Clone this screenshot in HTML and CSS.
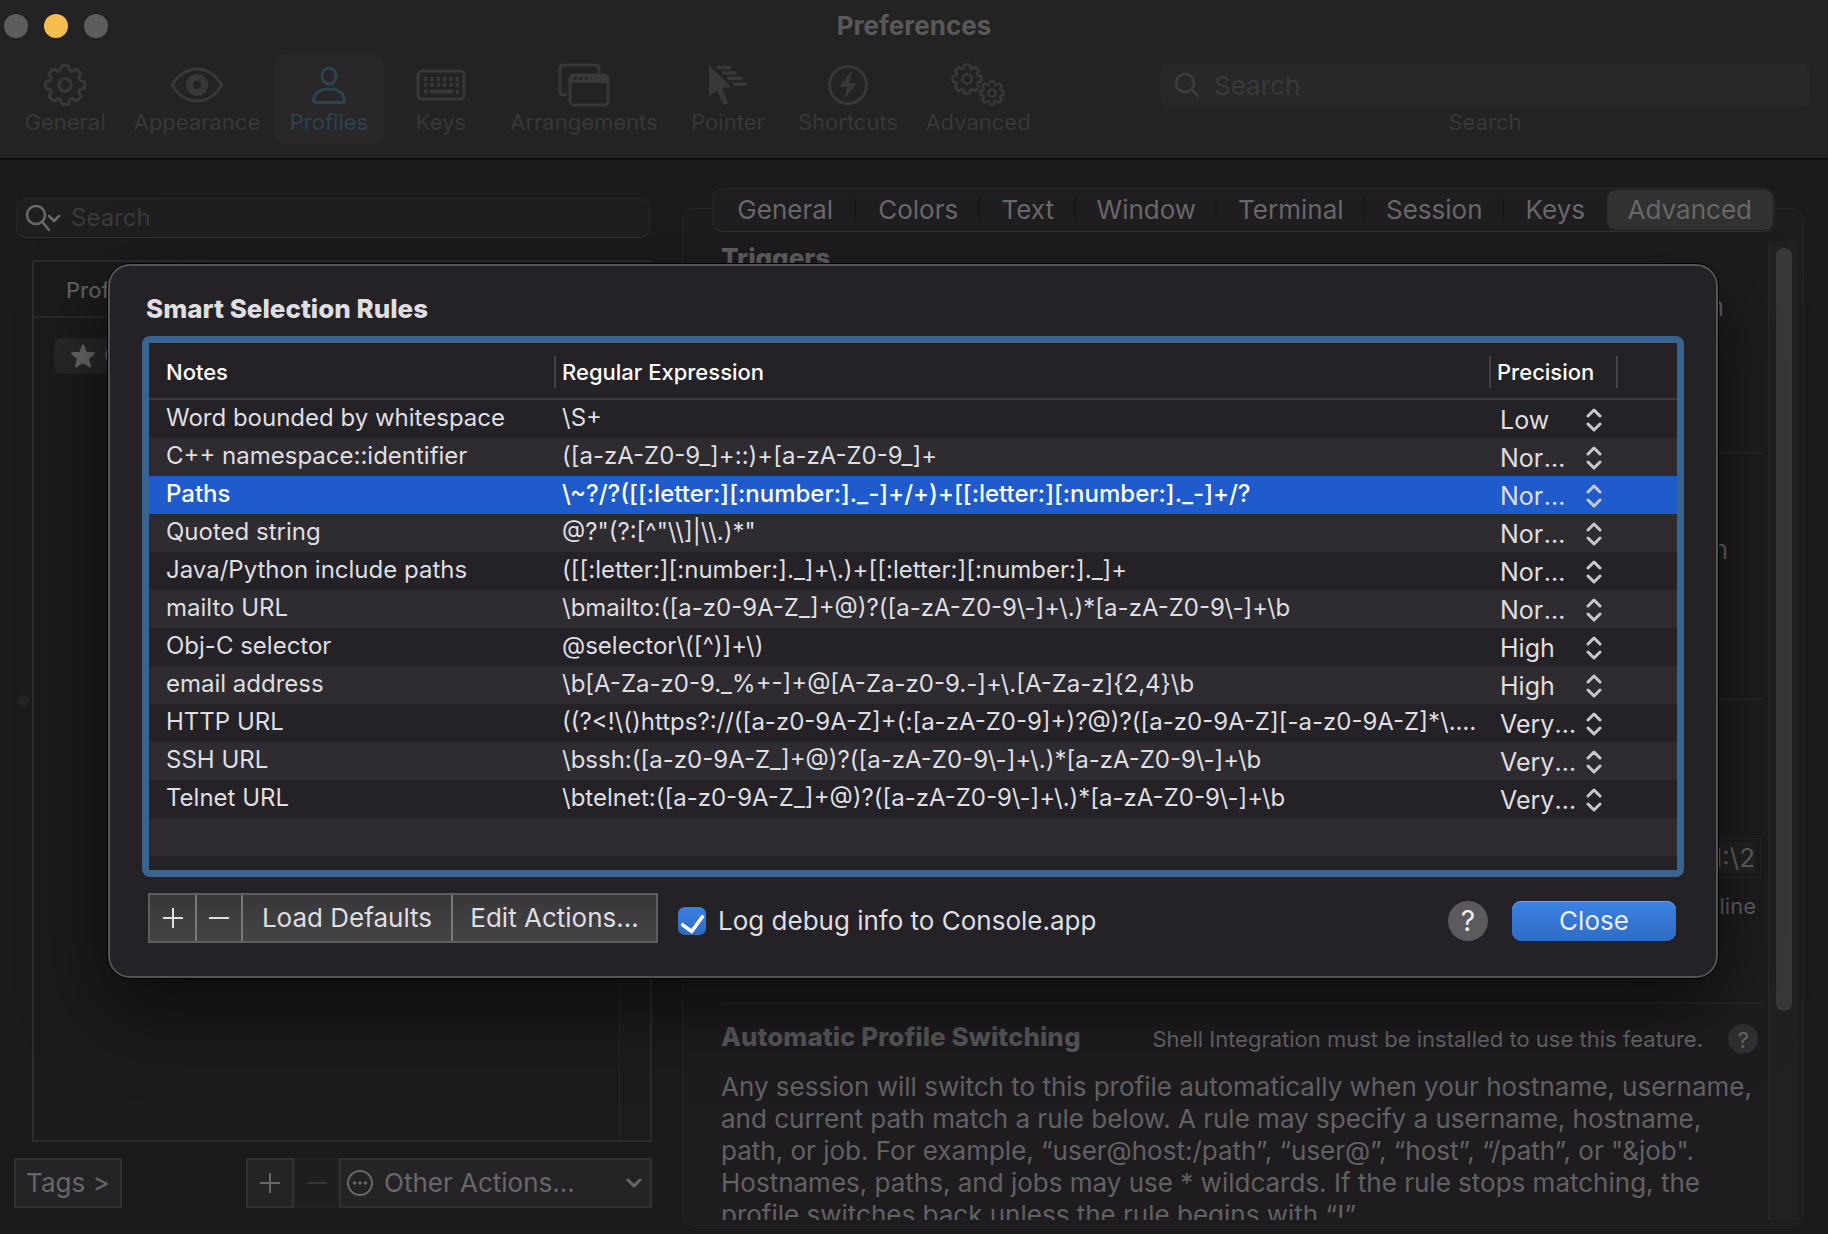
FILE: index.html
```html
<!DOCTYPE html>
<html lang="en">
<head>
<meta charset="utf-8">
<title>Preferences</title>
<link rel="stylesheet" href="styles.css">
</head>
<body>
<svg class="defs" aria-hidden="true">
  <defs>
    <path id="tooth" d="M-5.74-13.86L-5.2-14.2Q-4.4-14.6-4.3-15.6L-3.9-18Q-3.5-19.6-1.9-19.6H1.9Q3.5-19.6 3.9-18L4.3-15.6Q4.4-14.6 5.2-14.2L5.74-13.86"/>
    <g id="gear" fill="none">
      <use href="#tooth"/><use href="#tooth" transform="rotate(45)"/><use href="#tooth" transform="rotate(90)"/><use href="#tooth" transform="rotate(135)"/>
      <use href="#tooth" transform="rotate(180)"/><use href="#tooth" transform="rotate(225)"/><use href="#tooth" transform="rotate(270)"/><use href="#tooth" transform="rotate(315)"/>
      <circle r="6.2"/>
    </g>
    <g id="updown" fill="none" stroke="currentColor" stroke-width="3" stroke-linecap="round" stroke-linejoin="round">
      <path d="M2 8L8 2L14 8M2 16L8 22L14 16"/>
    </g>
  </defs>
</svg>
<div class="window">
  <header class="chrome">
    <div class="titlebar">
      <div class="lights">
        <button class="light" aria-label="Close window"></button>
        <button class="light light-minimize" aria-label="Minimize window"></button>
        <button class="light" aria-label="Zoom window"></button>
      </div>
      <h1>Preferences</h1>
    </div>
    <div class="toolbar">
      <nav class="tools">
        <button class="tool"><svg width="44" height="44" viewBox="-22 -22 44 44" stroke="currentColor" stroke-width="3"><use href="#gear"/></svg>General</button>
        <button class="tool"><svg width="54" height="36" viewBox="0 0 54 36"><path d="M2 18C9 7 18 2 27 2S45 7 52 18C45 29 36 34 27 34S9 29 2 18Z" fill="none" stroke="currentColor" stroke-width="3" stroke-linejoin="round"/><path fill="currentColor" fill-rule="evenodd" d="M27 7a11 11 0 1 1 0 22a11 11 0 1 1 0-22ZM27 14a4 4 0 1 0 0 8a4 4 0 1 0 0-8Z"/></svg>Appearance</button>
        <button class="tool tool-active"><svg width="36" height="38" viewBox="0 0 36 38" fill="none" stroke="currentColor" stroke-width="3"><ellipse cx="18" cy="10" rx="7" ry="8"/><path d="M5 36.500Q2.500 36.500 2.500 34C3 27.500 9 23 18 23S33 27.500 33.500 34Q33.500 36.500 31 36.500Z"/></svg>Profiles</button>
        <button class="tool"><svg width="50" height="32" viewBox="0 0 50 32"><rect x="2" y="2" width="46" height="28" rx="4" fill="none" stroke="currentColor" stroke-width="3"/><path d="M8 10H43M8 16H43" stroke="currentColor" stroke-width="4" stroke-dasharray="3.500 2.800"/><path d="M8 22.500H11.500M14 22.500H37M39.500 22.500H43" stroke="currentColor" stroke-width="4"/></svg>Keys</button>
        <button class="tool"><svg width="52" height="44" viewBox="0 0 52 44"><path d="M9 32H6Q2 32 2 28V6Q2 2 6 2H37Q41 2 41 6V10" fill="none" stroke="currentColor" stroke-width="3"/><rect x="12" y="12" width="38" height="30" rx="4" fill="none" stroke="currentColor" stroke-width="3"/><path fill="currentColor" d="M12 12H50V20H12Z"/><path class="window-dots" d="M16 15.500h2.500M21.500 15.500H24M27 15.500h2.500" stroke-width="2.500"/></svg>Arrangements</button>
        <button class="tool"><svg width="40" height="42" viewBox="0 0 40 42" fill="currentColor"><path d="M1 1L23 23L14 24L20 38Q19 41 15 40.500L9 27L1 32Z"/><path d="M10 3.500H22M15 9H27M20 14.500H33M25 20H38" stroke="currentColor" stroke-width="3.500" stroke-linecap="round"/><path class="pointer-edge" fill="none" stroke-width="2" d="M4 1L25 22"/></svg>Pointer</button>
        <button class="tool"><svg width="42" height="42" viewBox="0 0 42 42"><circle cx="21" cy="21" r="18.500" fill="none" stroke="currentColor" stroke-width="3"/><path fill="currentColor" d="M24 7.500L12 23H20L17 35L30 19H22L25 8Z"/></svg>Shortcuts</button>
        <button class="tool"><svg width="54" height="44" viewBox="0 0 54 44" stroke="currentColor"><g transform="translate(16 16) scale(.74)" stroke-width="3.700"><use href="#gear"/></g><g transform="translate(41 30) scale(.6)" stroke-width="4.200"><use href="#gear"/></g></svg>Advanced</button>
      </nav>
      <div class="toolbar-search">
        <div class="search-field">
          <svg width="26" height="26" viewBox="0 0 26 26" fill="none" stroke="currentColor" stroke-width="2.500" stroke-linecap="round"><circle cx="11" cy="11" r="9"/><path d="M17.500 17.500L24 24"/></svg>
          <input id="find" type="search" placeholder="Search">
        </div>
        <label for="find">Search</label>
      </div>
    </div>
  </header>

  <main class="body">
    <section class="profiles">
      <div class="profile-search">
        <svg width="36" height="30" viewBox="0 0 36 30" fill="none" stroke="currentColor" stroke-width="2.500" stroke-linecap="round"><circle cx="11" cy="12" r="9"/><path d="M17.500 19L24 27M24 13L29 18L34 13"/></svg>
        <input type="search" placeholder="Search" aria-label="Search profiles">
      </div>
      <div class="list-row">
        <span class="split-handle"></span>
        <div class="profile-list">
          <div class="list-head">Profile Name</div>
          <div class="list-body">
            <div class="list-items">
              <div class="profile"><svg width="26" height="26" viewBox="0 0 26 26" fill="currentColor" stroke="currentColor" stroke-width="2" stroke-linejoin="round"><path d="M13 2.500L16 9.800L24 10.300L18 15.500L20 23.500L13 19L6 23.500L8 15.500L2 10.300L10 9.800Z"/></svg>Classic</div>
            </div>
            <div class="list-track"></div>
          </div>
        </div>
      </div>
      <div class="list-actions">
        <button class="flat">Tags &gt;</button>
        <div class="action-group">
          <button class="flat" aria-label="Add profile"><svg width="22" height="22" viewBox="0 0 22 22" stroke="currentColor" stroke-width="2"><path d="M1 11H21M11 1V21"/></svg></button>
          <button class="flat" aria-label="Remove profile" disabled><svg width="22" height="22" viewBox="0 0 22 22" stroke="currentColor" stroke-width="2"><path d="M1 11H21"/></svg></button>
          <button class="flat other-actions">
            <svg width="28" height="28" viewBox="0 0 28 28"><circle cx="14" cy="14" r="12" fill="none" stroke="currentColor" stroke-width="2"/><g fill="currentColor"><circle cx="8.500" cy="14" r="1.800"/><circle cx="14" cy="14" r="1.800"/><circle cx="19.500" cy="14" r="1.800"/></g></svg>
            <span>Other Actions…</span>
            <svg width="16" height="12" viewBox="0 0 16 12" fill="none" stroke="currentColor" stroke-width="3" stroke-linecap="round" stroke-linejoin="round"><path d="M2 3L8 9L14 3"/></svg>
          </button>
        </div>
      </div>
    </section>

    <section class="detail">
      <div class="tabs" role="tablist">
        <button role="tab">General</button>
        <button role="tab">Colors</button>
        <button role="tab">Text</button>
        <button role="tab">Window</button>
        <button role="tab">Terminal</button>
        <button role="tab">Session</button>
        <button role="tab">Keys</button>
        <button role="tab" aria-selected="true">Advanced</button>
      </div>
      <div class="panel">
        <div class="settings">
          <section class="group group-triggers">
            <h2>Triggers</h2>
            <p class="side-note">Documentation</p>
          </section>
          <section class="group group-selection">
            <p class="side-note">Selection</p>
          </section>
          <section class="group group-history">
            <div class="command"><span>\1:\2</span></div>
            <p class="hint">\2 is the line</p>
          </section>
          <section class="group-switching">
            <div class="switching-head">
              <h2>Automatic Profile Switching</h2>
              <span class="shell-note">Shell Integration must be installed to use this feature.</span>
              <button class="help help-small" aria-label="Help">?</button>
            </div>
            <p class="description">Any session will switch to this profile automatically when your hostname, username, and current path match a rule below. A rule may specify a username, hostname, path, or job. For example, “user@host:/path”, “user@”, “host”, “/path”, or "&amp;job". Hostnames, paths, and jobs may use * wildcards. If the rule stops matching, the profile switches back unless the rule begins with “!”</p>
          </section>
        </div>
        <div class="track"><div class="thumb"></div></div>
      </div>
    </section>
  </main>

  <section class="sheet" role="dialog" aria-labelledby="sheet-title">
    <h2 id="sheet-title">Smart Selection Rules</h2>
    <div class="table-frame">
      <table>
        <colgroup><col class="col-notes"><col><col class="col-precision"><col class="col-rest"></colgroup>
        <thead>
          <tr><th><span>Notes</span></th><th><span>Regular Expression</span></th><th><span>Precision</span></th><td></td></tr>
        </thead>
        <tbody>
          <tr><td>Word bounded by whitespace</td><td>\S+</td><td><div class="popup"><select aria-label="Precision"><option>Low</option></select><svg width="16" height="24"><use href="#updown"/></svg></div></td><td></td></tr>
          <tr><td>C++ namespace::identifier</td><td>([a-zA-Z0-9_]+::)+[a-zA-Z0-9_]+</td><td><div class="popup"><select aria-label="Precision"><option>Normal</option></select><svg width="16" height="24"><use href="#updown"/></svg></div></td><td></td></tr>
          <tr class="selected"><td>Paths</td><td>\~?/?([[:letter:][:number:]._-]+/+)+[[:letter:][:number:]._-]+/?</td><td><div class="popup"><select aria-label="Precision"><option>Normal</option></select><svg width="16" height="24"><use href="#updown"/></svg></div></td><td></td></tr>
          <tr><td>Quoted string</td><td>@?"(?:[^"\\]|\\.)*"</td><td><div class="popup"><select aria-label="Precision"><option>Normal</option></select><svg width="16" height="24"><use href="#updown"/></svg></div></td><td></td></tr>
          <tr><td>Java/Python include paths</td><td>([[:letter:][:number:]._]+\.)+[[:letter:][:number:]._]+</td><td><div class="popup"><select aria-label="Precision"><option>Normal</option></select><svg width="16" height="24"><use href="#updown"/></svg></div></td><td></td></tr>
          <tr><td>mailto URL</td><td>\bmailto:([a-z0-9A-Z_]+@)?([a-zA-Z0-9\-]+\.)*[a-zA-Z0-9\-]+\b</td><td><div class="popup"><select aria-label="Precision"><option>Normal</option></select><svg width="16" height="24"><use href="#updown"/></svg></div></td><td></td></tr>
          <tr><td>Obj-C selector</td><td>@selector\([^)]+\)</td><td><div class="popup"><select aria-label="Precision"><option>High</option></select><svg width="16" height="24"><use href="#updown"/></svg></div></td><td></td></tr>
          <tr><td>email address</td><td>\b[A-Za-z0-9._%+-]+@[A-Za-z0-9.-]+\.[A-Za-z]{2,4}\b</td><td><div class="popup"><select aria-label="Precision"><option>High</option></select><svg width="16" height="24"><use href="#updown"/></svg></div></td><td></td></tr>
          <tr><td>HTTP URL</td><td>((?&lt;!\()https?://([a-z0-9A-Z]+(:[a-zA-Z0-9]+)?@)?([a-z0-9A-Z][-a-z0-9A-Z]*\.)+[A-Za-z]+</td><td><div class="popup"><select aria-label="Precision"><option>Very High</option></select><svg width="16" height="24"><use href="#updown"/></svg></div></td><td></td></tr>
          <tr><td>SSH URL</td><td>\bssh:([a-z0-9A-Z_]+@)?([a-zA-Z0-9\-]+\.)*[a-zA-Z0-9\-]+\b</td><td><div class="popup"><select aria-label="Precision"><option>Very High</option></select><svg width="16" height="24"><use href="#updown"/></svg></div></td><td></td></tr>
          <tr><td>Telnet URL</td><td>\btelnet:([a-z0-9A-Z_]+@)?([a-zA-Z0-9\-]+\.)*[a-zA-Z0-9\-]+\b</td><td><div class="popup"><select aria-label="Precision"><option>Very High</option></select><svg width="16" height="24"><use href="#updown"/></svg></div></td><td></td></tr>
        </tbody>
      </table>
      <div class="empty-rows"></div>
    </div>
    <footer class="sheet-foot">
      <div class="rule-buttons">
        <button aria-label="Add rule"><svg width="22" height="22" viewBox="0 0 22 22" stroke="currentColor" stroke-width="2"><path d="M1 11H21M11 1V21"/></svg></button>
        <button aria-label="Remove rule"><svg width="22" height="22" viewBox="0 0 22 22" stroke="currentColor" stroke-width="2"><path d="M1 11H21"/></svg></button>
        <button>Load Defaults</button>
        <button>Edit Actions…</button>
      </div>
      <label class="check"><input type="checkbox" checked>Log debug info to Console.app</label>
      <button class="help help-large" aria-label="Help">?</button>
      <button class="primary">Close</button>
    </footer>
  </section>
</div>
</body>
</html>
```
FILE: styles.css
```css
* { box-sizing: border-box; }

body {
  margin: 0;
  background: #1c1a1d;
  font-family: Inter, "Liberation Sans", sans-serif;
  font-size: 26px;
  line-height: 32px;
  color: #dfdee0;
}

h1, h2, p { margin: 0; font-size: 26px; line-height: 32px; }
h1 { font-weight: 700; }
h2 { font-weight: 800; }
p { font-weight: 400; }

button, input, select {
  margin: 0;
  padding: 0;
  border: 0;
  background: none;
  color: inherit;
  font: inherit;
  appearance: none;
}

svg { display: block; flex: none; }
.defs { position: absolute; width: 0; height: 0; }

.window {
  position: relative;
  display: flex;
  flex-direction: column;
  height: 100vh;
  overflow: hidden;
}

/* Title bar and toolbar */
.chrome {
  background: #232323;
  border-bottom: 2px solid #111111;
  padding-bottom: 14px;
}

.titlebar {
  display: grid;
  grid-template-columns: 1fr auto 1fr;
  align-items: center;
  height: 52px;
  margin-bottom: 2px;
  color: #5a585a;
}

.lights { display: flex; gap: 16px; padding-left: 4px; }
.light { width: 24px; height: 24px; border-radius: 50%; background: #5f5c60; }
.light-minimize { background: #f5bf4f; }

.toolbar { display: flex; padding: 0 18px 0 10px; font-size: 22px; line-height: 24px; color: #383838; }

.tools { display: grid; grid-template-columns: 110px 154px 110px 114px 172px 116px 124px 136px; }

.tool {
  display: grid;
  grid-template-rows: 42px 24px;
  row-gap: 4px;
  place-items: center;
  padding: 10px 0;
  border-radius: 12px;
}

.tool-active { background: #29272a; color: #2c4450; }
.window-dots, .pointer-edge { stroke: #232323; }

.toolbar-search {
  flex: 1;
  display: flex;
  flex-direction: column;
  align-items: center;
  gap: 3px;
  margin-left: 114px;
  padding-top: 9px;
}

.search-field {
  display: flex;
  align-items: center;
  gap: 14px;
  width: 100%;
  height: 44px;
  padding: 0 14px;
  border-radius: 10px;
  background: #29272a;
  font-size: 26px;
  color: #3f3e40;
}

input[type="search"] { flex: 1; min-width: 0; }
input::placeholder { color: #3b393c; opacity: 1; }

/* Left column */
.body {
  flex: 1;
  min-height: 0;
  display: flex;
  gap: 30px;
  padding: 0 24px 0 14px;
}

.profiles {
  flex: none;
  width: 638px;
  display: flex;
  flex-direction: column;
  padding: 38px 0 26px;
}

.profile-search {
  display: flex;
  align-items: center;
  gap: 10px;
  height: 40px;
  margin: 0 2px 22px;
  padding: 0 8px;
  border: 1px solid #2a282b;
  border-bottom-color: #343235;
  border-radius: 10px;
  background: #201e21;
  font-size: 24px;
  color: #6b696c;
}

.list-row { flex: 1; display: flex; align-items: center; gap: 3px; padding-left: 3px; }
.split-handle { width: 12px; height: 12px; border-radius: 50%; background: #252326; }

.profile-list {
  flex: 1;
  align-self: stretch;
  display: flex;
  flex-direction: column;
  border: 2px solid #2d2b2e;
}

.list-head {
  height: 56px;
  padding-left: 32px;
  border-bottom: 2px solid #2a282b;
  background: #1b1b1b;
  font-size: 22px;
  font-weight: 500;
  line-height: 56px;
  color: #5f5e60;
}

.list-body { flex: 1; display: flex; }
.list-items { flex: 1; padding: 20px; }

.profile {
  display: flex;
  align-items: center;
  gap: 8px;
  height: 36px;
  padding-left: 16px;
  border-radius: 8px;
  background: #272727;
  font-size: 24px;
  color: #676767;
}

.list-track { width: 31px; border-left: 1px solid #262626; background: #1d1d1d; }

.list-actions { display: flex; justify-content: space-between; margin-top: 16px; }

.flat {
  display: grid;
  place-items: center;
  height: 50px;
  padding: 0 10px;
  border: 2px solid #323033;
  background: #252326;
  color: #69676a;
}

.flat:disabled { border-color: #232124; background: #1f1d20; color: #353336; }
.action-group { display: grid; grid-template-columns: 48px 45px 313px; }
.action-group .flat { padding: 0; }
.action-group .other-actions { display: flex; align-items: center; gap: 10px; padding: 0 8px 0 5px; }
.other-actions span { flex: 1; text-align: left; }

/* Right column */
.detail { flex: 1; min-width: 0; display: flex; flex-direction: column; padding: 28px 0 8px; }

.tabs {
  z-index: 1;
  display: grid;
  grid-template-columns: 143fr 124fr 96fr 142fr 148fr 140fr 103fr 167fr;
  height: 44px;
  margin: 0 29px -24px 30px;
  padding: 1px;
  border: 1px solid #2a282b;
  border-bottom-color: #343235;
  border-radius: 12px;
  background: #201e21;
  color: #69686a;
}

.tabs button { background: linear-gradient(#1a181b, #1a181b) right center / 2px 24px no-repeat; }
.tabs button:nth-last-child(2) { background: none; }
.tabs [aria-selected="true"] { border-radius: 9px; background: #323232; }

.panel {
  flex: 1;
  min-height: 0;
  display: flex;
  gap: 4px;
  padding: 33px 5px 5px 38px;
  border: 1px solid #29272a;
  border-radius: 12px;
  background: #1e1c1f;
}

.settings { flex: 1; min-width: 0; overflow: hidden; color: #626163; }
.group { border-bottom: 2px solid #262427; }
.group-triggers { height: 212px; }
.group-selection { height: 246px; padding-top: 80px; }
.group-history { height: 304px; padding-top: 138px; }
.side-note { padding-right: 36px; text-align: right; }
.group-triggers .side-note { padding: 17px 40px 0 0; }
.command { height: 40px; margin-right: 3px; padding: 3px 5px; border: 1px solid #29272a; text-align: right; }
.command span { display: inline-block; background: #242424; }
.hint { padding: 12px 8px 0 0; font-size: 22px; text-align: right; }

.group-switching { padding-top: 17px; }
.switching-head { display: flex; align-items: center; gap: 25px; height: 36px; padding-right: 6px; color: #5b5a5c; }
.switching-head h2 { align-self: flex-start; }
.shell-note { margin-left: auto; font-size: 22px; white-space: nowrap; color: #6a696b; }
.description { margin-top: 14px; }

.track { width: 30px; padding: 6px 0; border-left: 1px solid #29272a; background: #222023; }
.thumb { width: 16px; height: 79%; margin: 0 auto; border-radius: 8px; background: #3a383b; }

.help { display: grid; place-items: center; flex: none; border-radius: 50%; }
.help-small { width: 30px; height: 30px; background: #303030; font-size: 22px; color: #6a696b; }
.help-large { width: 40px; height: 40px; margin-left: auto; background: #5c5a5d; font-size: 28px; color: #ecebed; }

/* Sheet over the window */
.sheet {
  position: absolute;
  z-index: 2;
  top: 264px;
  left: 108px;
  right: 110px;
  padding: 27px 32px;
  border: 2px solid #555356;
  border-radius: 22px;
  background: #242227;
  box-shadow: 0 0 0 1px #000000, 0 30px 80px rgba(0, 0, 0, .6);
}

.sheet > h2 { margin: 0 0 11px 4px; }

.table-frame { border: 7px solid #38648f; border-radius: 8px; }

table { width: 100%; border-collapse: separate; border-spacing: 0; table-layout: fixed; font-size: 24px; }
.col-notes { width: 407px; }
.col-precision { width: 127px; }
.col-rest { width: 59px; }

thead th, thead td { height: 57px; border-bottom: 2px solid #3c3a3e; }
th { padding: 2px 0 0 6px; font-size: 22px; font-weight: 500; text-align: left; color: #ffffff; }
th:first-child { padding-left: 17px; }
th span { display: block; border-right: 2px solid #464448; }

td {
  height: 38px;
  padding: 0 12px 0 6px;
  line-height: 36px;
  overflow: hidden;
  text-overflow: ellipsis;
  white-space: nowrap;
  vertical-align: top;
}

tbody td:first-child { padding-left: 17px; }
tbody td:nth-child(3) { padding: 0 0 0 9px; }
tbody tr:nth-child(even) { background: #2e2c31; }
tbody .selected { background: #1f5bca; font-weight: 500; color: #ffffff; }

.popup { display: flex; align-items: center; gap: 4px; height: 38px; padding-top: 2px; font-size: 25px; font-weight: 400; color: #c9c8ca; }
.popup select { width: 82px; height: 36px; overflow: hidden; text-overflow: ellipsis; white-space: nowrap; color: #dfdee0; }

.empty-rows { height: 52px; background: linear-gradient(#2e2c31 38px, #242227 38px); }

.sheet-foot { display: flex; align-items: center; height: 56px; margin: 16px 8px 0 6px; }

.rule-buttons {
  align-self: flex-start;
  display: grid;
  grid-template-columns: 45px 46px 210px 205px;
  height: 50px;
  border: 2px solid #5f5d60;
  background: linear-gradient(#39373a, #454346);
}

.rule-buttons button { display: grid; place-items: center; }
.rule-buttons button + button { border-left: 2px solid #7a787b; }

.check { display: flex; align-items: center; gap: 12px; margin-left: 20px; }

.check input {
  display: grid;
  justify-items: center;
  width: 28px;
  height: 28px;
  padding-top: 3px;
  border-radius: 7px;
  background: linear-gradient(#3b80e3, #2f6cc4);
}

.check input:checked::after {
  content: "";
  width: 11px;
  height: 18px;
  border: solid #ffffff;
  border-width: 0 4px 4px 0;
  border-radius: 2px;
  transform: rotate(36deg);
}

.primary {
  width: 164px;
  height: 40px;
  margin-left: 24px;
  border-radius: 9px;
  background: linear-gradient(#3b80e3, #2f6cc4);
  box-shadow: inset 0 1px 0 #6da0ea;
  color: #e6eefb;
}
```
